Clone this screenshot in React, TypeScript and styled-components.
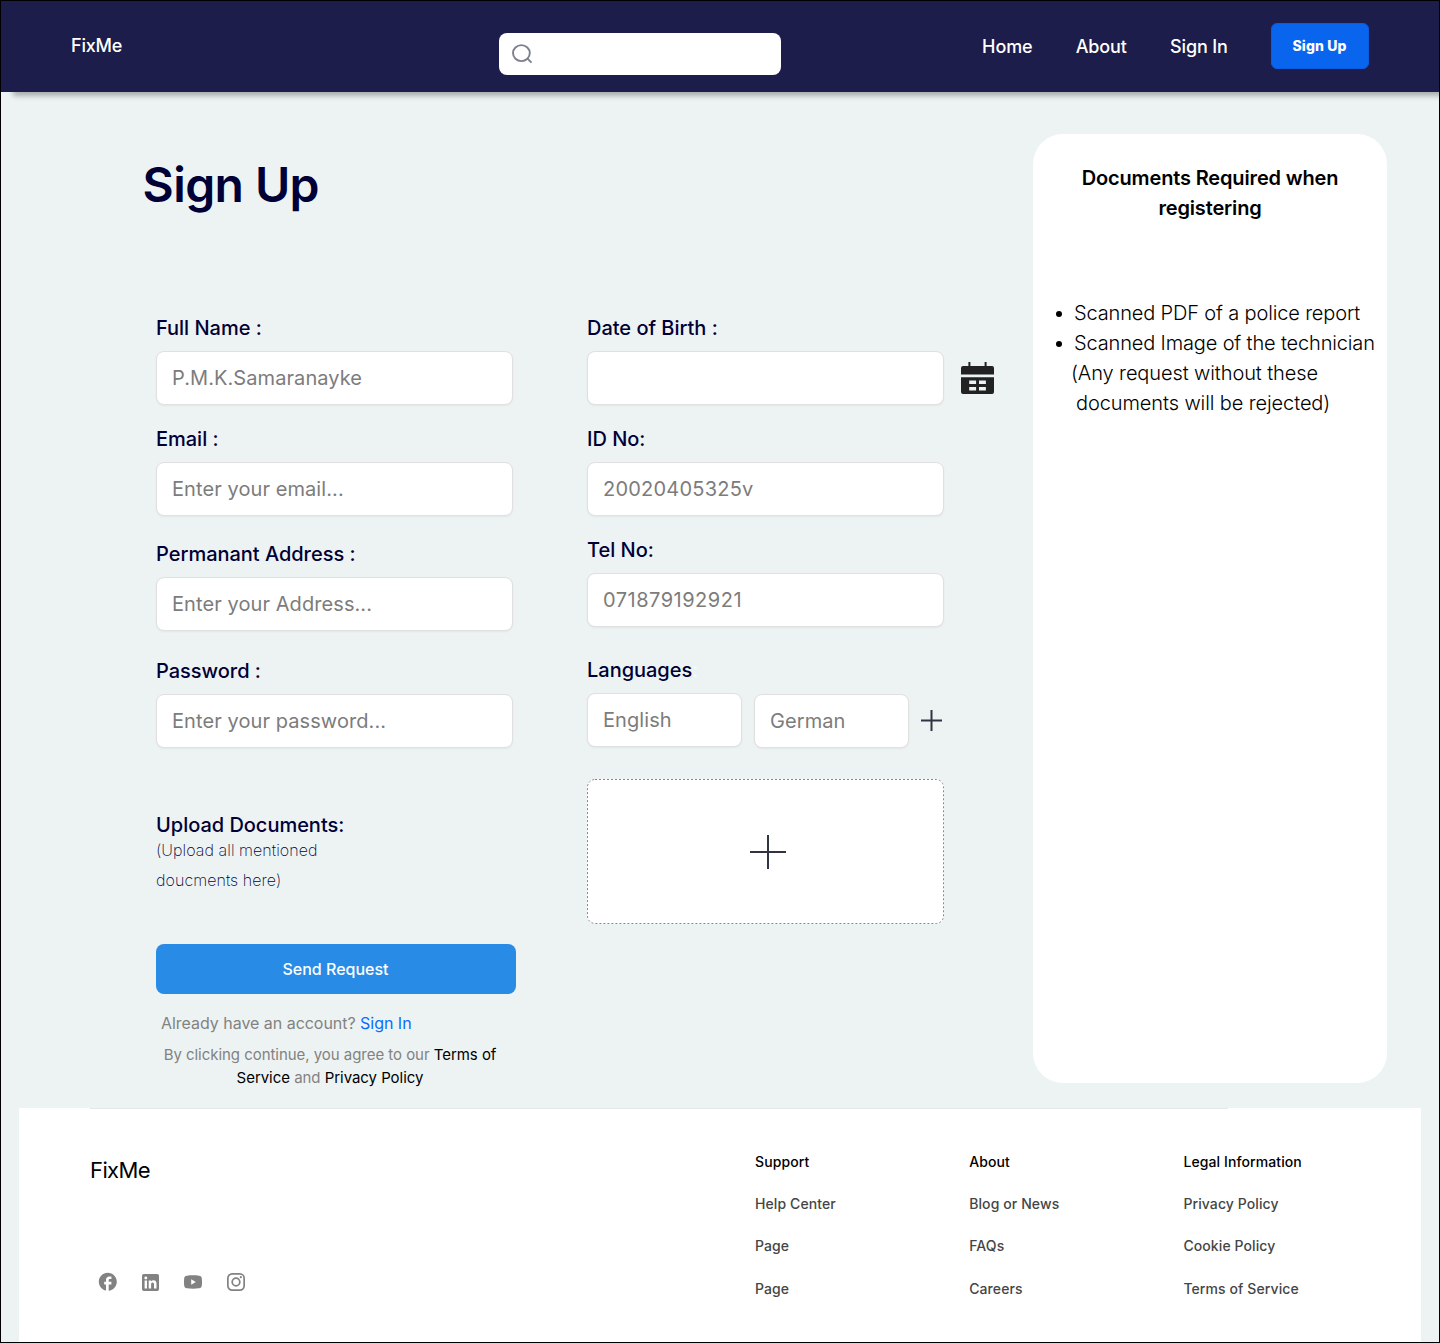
import React from "react";
import styled, { createGlobalStyle } from "styled-components";
import { MdFacebook } from "react-icons/md";

const GlobalStyle = createGlobalStyle`
  * { box-sizing: border-box; }
  body { margin: 0; font-family: Inter, "Liberation Sans", sans-serif; }
  a { color: inherit; text-decoration: none; }
`;

const Page = styled.div`
  width: 1440px;
  height: 1343px;
  border: 1px solid #000;
  background: #edf3f3;
  overflow: hidden;
  display: flex;
  flex-direction: column;
`;

const Header = styled.header`
  flex: none;
  height: 91px;
  padding: 0 70px 2px;
  display: flex;
  align-items: center;
  background: #1c1d4a;
  color: #fff;
  box-shadow: 12px 4px 5px rgba(0, 0, 0, 0.28);
`;

const Brand = styled.a`
  width: 428px;
  padding-top: 1px;
  font-size: 18px;
  line-height: 26px;
  font-weight: 500;
  letter-spacing: -0.2px;
`;

const SearchBox = styled.label`
  width: 282px;
  height: 42px;
  margin-top: 16px;
  padding-left: 11px;
  display: flex;
  align-items: center;
  gap: 8px;
  background: #fff;
  border-radius: 8px;
`;

const SearchInput = styled.input`
  flex: 1;
  min-width: 0;
  border: 0;
  outline: 0;
  background: transparent;
  font: 500 16px Inter, sans-serif;
`;

const Nav = styled.nav`
  margin-left: auto;
  display: flex;
  align-items: center;
  gap: 43.2px;
  font-size: 18px;
  line-height: 26px;
  font-weight: 500;
  letter-spacing: -0.12px;
`;

const NavLink = styled.a`
  padding-top: 2px;
`;

const NavButton = styled.button`
  width: 98px;
  height: 46px;
  padding: 0 1px 0 0;
  border: 1px solid #0b5ce0;
  border-radius: 6px;
  background: #0a65ee;
  color: #fff;
  font: 800 14px Inter, sans-serif;
  letter-spacing: 0.1px;
`;

const Main = styled.main`
  flex: none;
  height: 1016px;
  padding: 42px 52px 0 142px;
  display: flex;
  justify-content: space-between;
`;

const FormArea = styled.section`
  width: 860px;
  padding-top: 21px;
`;

const Title = styled.h1`
  margin: 0 0 98px -0.4px;
  font-size: 48px;
  line-height: 60px;
  font-weight: 600;
  letter-spacing: -0.6px;
  color: #000036;
`;

const Columns = styled.div`
  padding-left: 13px;
  display: grid;
  grid-template-columns: 360px 420px;
  column-gap: 71px;
  align-items: start;
`;

const Column = styled.div`
  display: flex;
  flex-direction: column;
`;

const Field = styled.div<{ $top?: number }>`
  display: flex;
  flex-direction: column;
  gap: 8px;
  margin-top: ${(p) => p.$top ?? 0}px;
`;

const Label = styled.label`
  font-size: 20px;
  line-height: 30px;
  font-weight: 500;
  letter-spacing: -0.02px;
  color: #000036;
`;

const Faint = styled.span`
  color: #f8fbfb;
`;

const Input = styled.input<{ $width?: number; $drop?: number; $tracking?: number }>`
  width: ${(p) => p.$width ?? 357}px;
  height: 54px;
  margin: ${(p) => p.$drop ?? 0}px 0 0;
  padding: 0 15px;
  border: 1px solid #e0e0e0;
  border-radius: 8px;
  outline: 0;
  background: #fff;
  box-shadow: 0 1px 2px rgba(0, 0, 0, 0.05);
  font: 400 20px Inter, sans-serif;
  letter-spacing: ${(p) => p.$tracking ?? 0.08}px;
  color: #333;
  &::placeholder {
    color: #7c7c7c;
    opacity: 1;
  }
`;

const InputRow = styled.div<{ $gap: number }>`
  display: flex;
  align-items: flex-start;
  gap: ${(p) => p.$gap}px;
`;

const IconHolder = styled.span<{ $top: number }>`
  display: flex;
  margin-top: ${(p) => p.$top}px;
`;

const Hint = styled.p`
  width: 200px;
  margin: -5px 0 0;
  font-size: 16px;
  line-height: 30px;
  font-weight: 200;
  letter-spacing: 0.06px;
  color: #000036;
`;

const Submit = styled.button`
  width: 360px;
  height: 50px;
  margin: 49px 0 0;
  padding: 0 7px 0 6px;
  border: 0;
  border-radius: 8px;
  background: #288be6;
  color: #fff;
  font: 500 16px Inter, sans-serif;
`;

const Account = styled.p`
  margin: 17px 0 0 5px;
  font-size: 16px;
  line-height: 24px;
  letter-spacing: -0.03px;
  color: #828282;
`;

const BlueLink = styled.a`
  && {
    color: #0a6cff;
  }
`;

const Terms = styled.p`
  width: 348px;
  margin: 8px 0 0;
  display: flex;
  flex-direction: column;
  align-items: center;
  font-size: 15px;
  line-height: 23px;
  letter-spacing: -0.04px;
  color: #828282;
  a {
    color: #000;
  }
`;

const DropZone = styled.button`
  position: relative;
  width: 357px;
  height: 145px;
  margin: 31px 0 0;
  padding: 0 0 0 5px;
  display: flex;
  align-items: center;
  justify-content: center;
  border: 0;
  border-radius: 8px;
  background: #fff;
`;

const DashedOutline = styled.svg`
  position: absolute;
  inset: 0;
`;

const DocsCard = styled.aside`
  width: 354px;
  height: 949px;
  padding-top: 29px;
  border-radius: 30px;
  background: #fff;
  color: #000;
  font-size: 20px;
  line-height: 30px;
`;

const DocsTitle = styled.h2`
  width: 280px;
  margin: 0 auto 75px;
  font-size: 20px;
  line-height: 30px;
  font-weight: 600;
  letter-spacing: -0.15px;
  text-align: center;
`;

const DocsList = styled.ul`
  margin: 0;
  padding: 0;
  list-style: none;
  font-weight: 300;
  letter-spacing: -0.15px;
  white-space: nowrap;
`;

const DocsItem = styled.li`
  padding-left: 23px;
  display: flex;
  align-items: center;
  gap: 12px;
  &::before {
    content: "";
    width: 6px;
    height: 6px;
    margin-top: 1px;
    border-radius: 50%;
    background: #000;
  }
`;

const DocsNote = styled.li<{ $indent: number }>`
  padding-left: ${(p) => p.$indent}px;
  letter-spacing: -0.1px;
`;

const Footer = styled.footer`
  flex: 1;
  margin: 0 18px;
  background: #fff;
`;

const Divider = styled.hr`
  width: 1138px;
  height: 1px;
  margin: 0 0 0 71px;
  border: 0;
  background: #e6e8e8;
`;

const FooterBody = styled.div`
  padding: 41px 0 0 71px;
  display: flex;
`;

const FooterBrand = styled.div`
  width: 665px;
  padding-top: 3px;
`;

const FooterLogo = styled.div`
  font-size: 22px;
  line-height: 34px;
  letter-spacing: -0.6px;
  color: #000;
`;

const Socials = styled.div`
  margin-top: 83px;
  padding-left: 6px;
  display: flex;
  gap: 18.6px;
  color: #828282;
`;

const Social = styled.a`
  width: 24px;
  height: 24px;
  display: flex;
  align-items: center;
  justify-content: center;
`;

const LinkColumn = styled.div`
  width: 214.2px;
  display: flex;
  flex-direction: column;
  gap: 18.2px;
  font-size: 14px;
  line-height: 24px;
  font-weight: 500;
  letter-spacing: 0.1px;
  color: #454545;
`;

const LinkHeading = styled.div`
  color: #000;
`;

const SearchIcon = () => (
  <svg width="24" height="24" viewBox="0 0 24 24" fill="none" stroke="#7b808c" strokeWidth="1.9">
    <ellipse cx="11.4" cy="11.1" rx="8.4" ry="8" />
    <path d="M17.2 16.4 21.5 20.6" />
  </svg>
);

const CalendarIcon = () => (
  <svg width="33" height="32" viewBox="0 0 33 32" fill="#222">
    <path d="M7.4 0h2v4h14.2V0h2v4H31a2 2 0 0 1 2 2v6.6H0V6a2 2 0 0 1 2-2h5.4z" />
    <path
      fillRule="evenodd"
      d="M0 15.3h33V30a2 2 0 0 1-2 2H2a2 2 0 0 1-2-2zM8.2 18.4v3.6h6.9v-3.6zM18 18.4v3.6h6.9v-3.6zM8.2 25v3.6h6.9V25zM18 25v3.6h6.9V25z"
    />
  </svg>
);

const PlusIcon = ({ w, h }: { w: number; h: number }) => (
  <svg width={w} height={h} viewBox={`0 0 ${w} ${h}`} fill="none" stroke="#2f3440" strokeWidth="2">
    <path d={`M${w / 2} 0V${h}M0 ${h / 2}H${w}`} />
  </svg>
);

const LinkedinIcon = () => (
  <svg width="17" height="17" viewBox="0 0 17 17" fill="currentColor">
    <path
      fillRule="evenodd"
      d="M1.8 0h13.4A1.8 1.8 0 0 1 17 1.8v13.4a1.8 1.8 0 0 1-1.8 1.8H1.8A1.8 1.8 0 0 1 0 15.2V1.8A1.8 1.8 0 0 1 1.8 0zM2.6 6.5v7.9h2.4V6.5zM3.8 2.5a1.45 1.45 0 1 0 0 2.9 1.45 1.45 0 0 0 0-2.9zM6.7 6.5v7.9h2.4v-4.1c0-1.1.5-1.8 1.5-1.8s1.4.7 1.4 1.8v4.1h2.5V9.6c0-2.2-1.2-3.3-2.9-3.3-1.3 0-2.1.6-2.5 1.3V6.5z"
    />
  </svg>
);

const YoutubeIcon = () => (
  <svg width="18" height="14" viewBox="0 0 18 14" fill="currentColor">
    <path
      fillRule="evenodd"
      d="M3 .7C6.5.2 11.5.2 15 .7c1.9.3 2.6 1 2.8 2.7.3 2.3.3 4.9 0 7.2-.2 1.7-.9 2.4-2.8 2.7-3.5.5-8.5.5-12 0C1.1 13 .4 12.3.2 10.6-.1 8.3-.1 5.7.2 3.4.4 1.7 1.1 1 3 .7zM7.2 4.3v5.4L11.8 7z"
    />
  </svg>
);

const InstagramIcon = () => (
  <svg width="18" height="18" viewBox="0 0 18 18" fill="none" stroke="currentColor">
    <rect x=".85" y=".85" width="16.3" height="16.3" rx="4.3" strokeWidth="1.7" />
    <circle cx="9" cy="9" r="3.8" strokeWidth="1.7" />
    <circle cx="13.8" cy="4.2" r="1.1" fill="currentColor" stroke="none" />
  </svg>
);

const leftFields = [
  { label: "Full Name :", hint: "P.M.K.Samaranayke", top: 0 },
  { label: "Email :", hint: "Enter your email...", top: 19 },
  { label: "Permanant Address :", hint: "Enter your Address...", top: 23 },
  { label: "Password :", hint: "Enter your password...", top: 25 },
];

const footerColumns = [
  { title: "Support", links: ["Help Center", "Page", "Page"] },
  { title: "About", links: ["Blog or News", "FAQs", "Careers"] },
  { title: "Legal Information", links: ["Privacy Policy", "Cookie Policy", "Terms of Service"] },
];

export default function App() {
  return (
    <>
      <GlobalStyle />
      <Page>
        <Header>
          <Brand href="#">FixMe</Brand>
          <SearchBox>
            <SearchIcon />
            <SearchInput aria-label="Search" />
          </SearchBox>
          <Nav>
            <NavLink href="#">Home</NavLink>
            <NavLink href="#">About</NavLink>
            <NavLink href="#">Sign In</NavLink>
            <NavButton>Sign Up</NavButton>
          </Nav>
        </Header>

        <Main>
          <FormArea>
            <Title>Sign Up</Title>
            <Columns>
              <Column>
                {leftFields.map((f) => (
                  <Field key={f.label} $top={f.top}>
                    <Label>{f.label}</Label>
                    <Input placeholder={f.hint} />
                  </Field>
                ))}
                <Field $top={62}>
                  <Label>Upload Documents:</Label>
                </Field>
                <Hint>(Upload all mentioned doucments here)</Hint>
                <Submit>Send Request</Submit>
                <Account>
                  Already have an account? <BlueLink href="#">Sign In</BlueLink>
                </Account>
                <Terms>
                  <span>
                    By clicking continue, you agree to our <a href="#">Terms of</a>
                  </span>
                  <span>
                    <a href="#">Service</a> and <a href="#">Privacy Policy</a>
                  </span>
                </Terms>
              </Column>

              <Column>
                <Field>
                  <Label>Date of Birth :</Label>
                  <InputRow $gap={17}>
                    <Input />
                    <IconHolder $top={11}>
                      <CalendarIcon />
                    </IconHolder>
                  </InputRow>
                </Field>
                <Field $top={19}>
                  <Label>ID No:</Label>
                  <Input placeholder="20020405325v" $tracking={0.22} />
                </Field>
                <Field $top={19}>
                  <Label>Tel No:</Label>
                  <Input placeholder="071879192921" $tracking={0.5} />
                </Field>
                <Field $top={28}>
                  <Label>
                    Languages<Faint>:</Faint>
                  </Label>
                  <InputRow $gap={12}>
                    <Input $width={155} placeholder="English" />
                    <Input $width={155} $drop={1} placeholder="German" />
                    <IconHolder $top={17}>
                      <PlusIcon w={21} h={21} />
                    </IconHolder>
                  </InputRow>
                </Field>
                <DropZone aria-label="Add documents">
                  <DashedOutline width="357" height="145" fill="none" stroke="#8d8688">
                    <rect x=".5" y=".5" width="356" height="144" rx="7.5" strokeDasharray="2 2" />
                  </DashedOutline>
                  <PlusIcon w={36} h={34} />
                </DropZone>
              </Column>
            </Columns>
          </FormArea>

          <DocsCard>
            <DocsTitle>Documents Required when registering</DocsTitle>
            <DocsList>
              <DocsItem>Scanned PDF of a police report</DocsItem>
              <DocsItem>Scanned Image of the technician</DocsItem>
              <DocsNote $indent={38}>(Any request without these</DocsNote>
              <DocsNote $indent={43}>documents will be rejected)</DocsNote>
            </DocsList>
          </DocsCard>
        </Main>

        <Footer>
          <Divider />
          <FooterBody>
            <FooterBrand>
              <FooterLogo>FixMe</FooterLogo>
              <Socials>
                <Social href="#" aria-label="Facebook">
                  <MdFacebook size={21.6} />
                </Social>
                <Social href="#" aria-label="LinkedIn">
                  <LinkedinIcon />
                </Social>
                <Social href="#" aria-label="YouTube">
                  <YoutubeIcon />
                </Social>
                <Social href="#" aria-label="Instagram">
                  <InstagramIcon />
                </Social>
              </Socials>
            </FooterBrand>
            {footerColumns.map((c) => (
              <LinkColumn key={c.title}>
                <LinkHeading>{c.title}</LinkHeading>
                {c.links.map((l, i) => (
                  <a key={i} href="#">
                    {l}
                  </a>
                ))}
              </LinkColumn>
            ))}
          </FooterBody>
        </Footer>
      </Page>
    </>
  );
}
